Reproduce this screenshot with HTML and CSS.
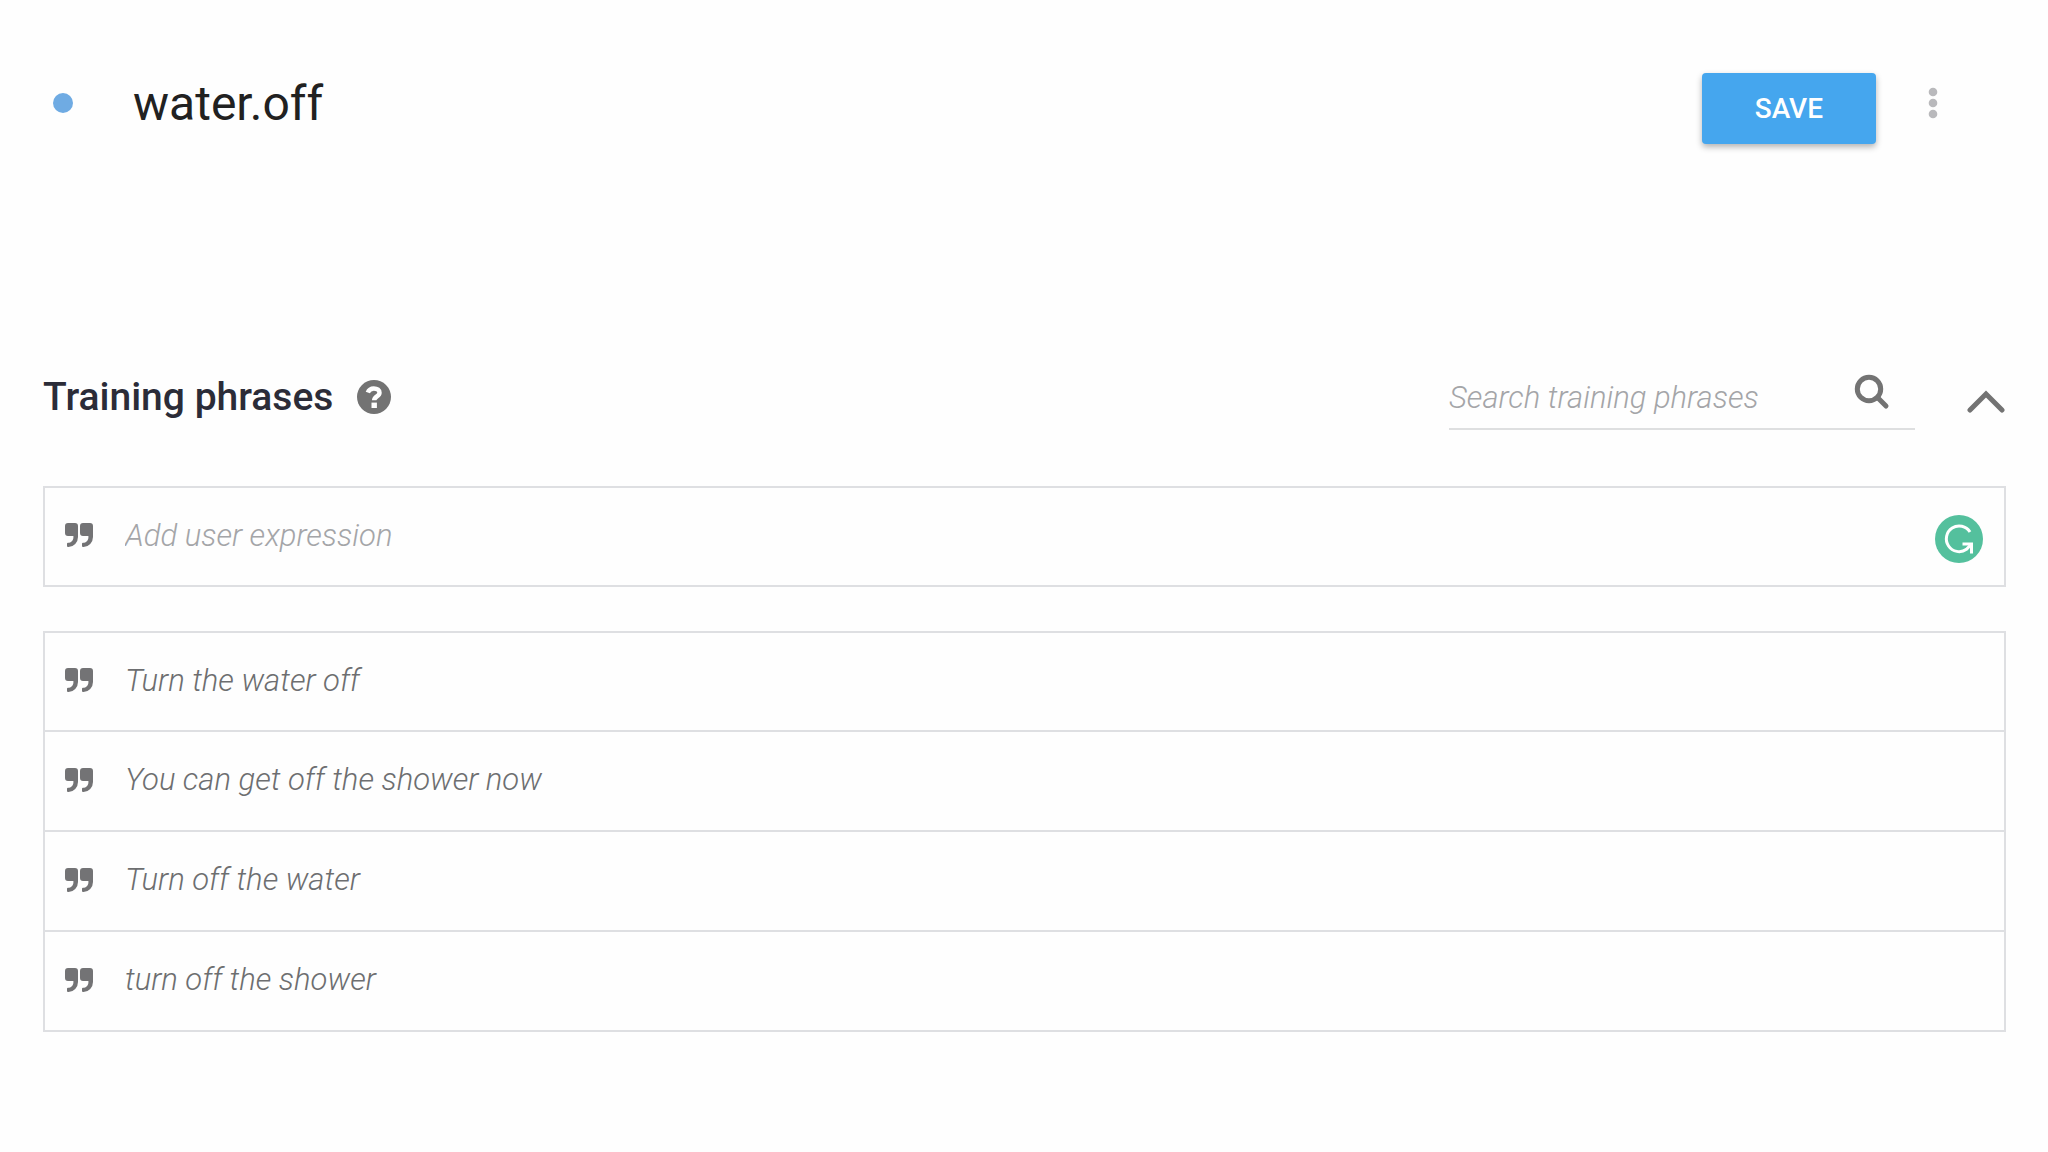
FILE: index.html
```html
<!DOCTYPE html>
<html lang="en">
<head>
    <meta charset="UTF-8">
    <meta name="viewport" content="width=device-width, initial-scale=1.0">
    <title>water.off</title>
    <link rel="stylesheet" href="styles.css">
</head>
<body>

<svg class="sprite" aria-hidden="true">
    <symbol id="quote" viewBox="0 0 28 24">
        <path d="M3 0h7a3 3 0 0 1 3 3v11a10 10 0 0 1-9.500 10H3a1 1 0 0 1-1-1v-2.200a1 1 0 0 1 1-1c3 0 5.400-2.300 5.400-5.300V13H3a3 3 0 0 1-3-3V3a3 3 0 0 1 3-3z"/>
        <path d="M18 0h7a3 3 0 0 1 3 3v11a10 10 0 0 1-9.500 10H18a1 1 0 0 1-1-1v-2.200a1 1 0 0 1 1-1c3 0 5.400-2.300 5.400-5.300V13H18a3 3 0 0 1-3-3V3a3 3 0 0 1 3-3z"/>
    </symbol>
</svg>

<header class="intent-header">
    <span class="status-dot"></span>
    <h1>water.off</h1>
    <button type="button" class="save-btn">SAVE</button>
    <button type="button" class="icon-btn menu-btn" aria-label="More options">
        <svg width="10" height="32" viewBox="0 0 10 32">
            <circle cx="5" cy="5" r="4.300"/>
            <circle cx="5" cy="16" r="4.300"/>
            <circle cx="5" cy="27" r="4.300"/>
        </svg>
    </button>
</header>

<main>
    <div class="section-header">
        <h2>Training phrases</h2>
        <button type="button" class="icon-btn help-btn" aria-label="Help">
            <svg width="34" height="34" viewBox="0 0 34 34">
                <circle cx="17" cy="17" r="17"/>
                <path class="mark" d="M10.800 12.500c1.200-3 3.300-4.100 6-4.100 3.500 0 5.700 1.700 5.700 4.300 0 3.800-5.300 3.500-5.300 7.600"/>
                <rect class="mark-dot" x="14.500" y="22.600" width="5.400" height="5.400"/>
            </svg>
        </button>
        <form class="search" role="search">
            <input type="text" aria-label="Search training phrases" placeholder="Search training phrases">
            <button type="submit" class="icon-btn" aria-label="Search">
                <svg class="stroke-icon" width="36" height="36" viewBox="0 0 36 36">
                    <circle cx="15" cy="15" r="11.700"/>
                    <path d="M23.500 23.500l8.500 8.500"/>
                </svg>
            </button>
        </form>
        <button type="button" class="icon-btn collapse-btn" aria-label="Collapse">
            <svg class="stroke-icon" width="38" height="24" viewBox="0 0 38 24">
                <path d="M3 20L19 4l16 16"/>
            </svg>
        </button>
    </div>

    <div class="phrase-box add-box">
        <label class="phrase">
            <svg class="quote"><use href="#quote"/></svg>
            <input type="text" aria-label="Add user expression" placeholder="Add user expression">
            <svg class="checker" viewBox="0 0 48 48">
                <circle cx="24" cy="24" r="24"/>
                <path class="checker-arc" d="M35 17A12.800 12.800 0 1 0 31.500 34.300L36 29.500"/>
                <path class="checker-arrow" d="M27.500 29h9v9.500"/>
            </svg>
        </label>
    </div>

    <ul class="phrase-box">
        <li class="phrase"><svg class="quote"><use href="#quote"/></svg>Turn the water off</li>
        <li class="phrase"><svg class="quote"><use href="#quote"/></svg>You can get off the shower now</li>
        <li class="phrase"><svg class="quote"><use href="#quote"/></svg>Turn off the water</li>
        <li class="phrase"><svg class="quote"><use href="#quote"/></svg>turn off the shower</li>
    </ul>
</main>

</body>
</html>
```
FILE: styles.css
```css
* {
    box-sizing: border-box;
}
body {
    margin: 0;
    padding: 73px 42px 72px 43px;
    font-family: Roboto, "Noto Sans", sans-serif;
    background-color: #fefefe;
    color: #212121;
}
h1, h2, ul {
    margin: 0;
    padding: 0;
}
svg {
    display: block;
    flex: none;
}
.sprite {
    position: absolute;
    width: 0;
    height: 0;
}
input {
    flex: 1;
    min-width: 0;
    padding: 0;
    border: none;
    outline: none;
    background: none;
    color: #6d6e70;
    font: inherit;
}
input::placeholder {
    color: #a4a5a8;
    opacity: 1;
}
.icon-btn {
    padding: 0;
    border: none;
    background: none;
    cursor: pointer;
    fill: #737373;
}
.stroke-icon {
    fill: none;
    stroke: #737373;
    stroke-width: 5;
    stroke-linecap: round;
}

/* header */
.intent-header {
    display: flex;
    align-items: flex-start;
    padding: 0 68px 0 10px;
    margin-bottom: 224px;
}
.status-dot {
    width: 20px;
    height: 20px;
    margin-top: 20px;
    border-radius: 50%;
    background-color: #6fabe3;
}
h1 {
    flex: 1;
    margin-left: 60px;
    font-size: 48px;
    font-weight: 400;
    line-height: 62px;
}
.save-btn {
    padding: 0 53px;
    border: none;
    border-radius: 4px;
    background-color: #45a6ee;
    box-shadow: 0 3px 6px rgba(0, 0, 0, 0.3);
    color: #fff;
    font-family: inherit;
    font-size: 28px;
    font-weight: 500;
    line-height: 71px;
    cursor: pointer;
}
.menu-btn {
    margin: 14px 0 0 52px;
    fill: #b9b9bc;
}

/* training phrases */
.section-header {
    display: flex;
    align-items: center;
    margin-bottom: 56px;
}
h2 {
    margin-right: 24px;
    padding-bottom: 4px;
    font-size: 39px;
    font-weight: 500;
    line-height: 56px;
    color: #2b2c38;
}
.help-btn {
    padding-bottom: 4px;
}
.mark {
    fill: none;
    stroke: #fff;
    stroke-width: 4.5;
}
.mark-dot {
    fill: #fff;
}
.search {
    display: flex;
    align-items: flex-start;
    width: 466px;
    height: 62px;
    margin-left: auto;
    padding: 6px 25px 0 0;
    border-bottom: 2px solid #dedfe0;
    font-size: 31px;
    font-style: italic;
    font-weight: 300;
}
.search input {
    line-height: 48px;
}
.collapse-btn {
    margin: 6px 1px 0 52px;
}
.phrase-box {
    border: 2px solid #dedfe2;
    list-style: none;
}
.add-box {
    margin-bottom: 44px;
}
.phrase {
    display: flex;
    align-items: center;
    height: 97px;
    padding: 0 21px 3px 20px;
    font-size: 31px;
    font-style: italic;
    font-weight: 300;
    color: #6d6e70;
}
.phrase + .phrase {
    height: 100px;
    border-top: 2px solid #dedfe2;
}
.quote {
    width: 28px;
    height: 24px;
    margin-right: 32px;
    fill: #737375;
}
.checker {
    width: 48px;
    height: 48px;
    margin-top: 8px;
    fill: #54c09d;
}
.checker-arc, .checker-arrow {
    fill: none;
    stroke: #fff;
    stroke-width: 3;
}
```
